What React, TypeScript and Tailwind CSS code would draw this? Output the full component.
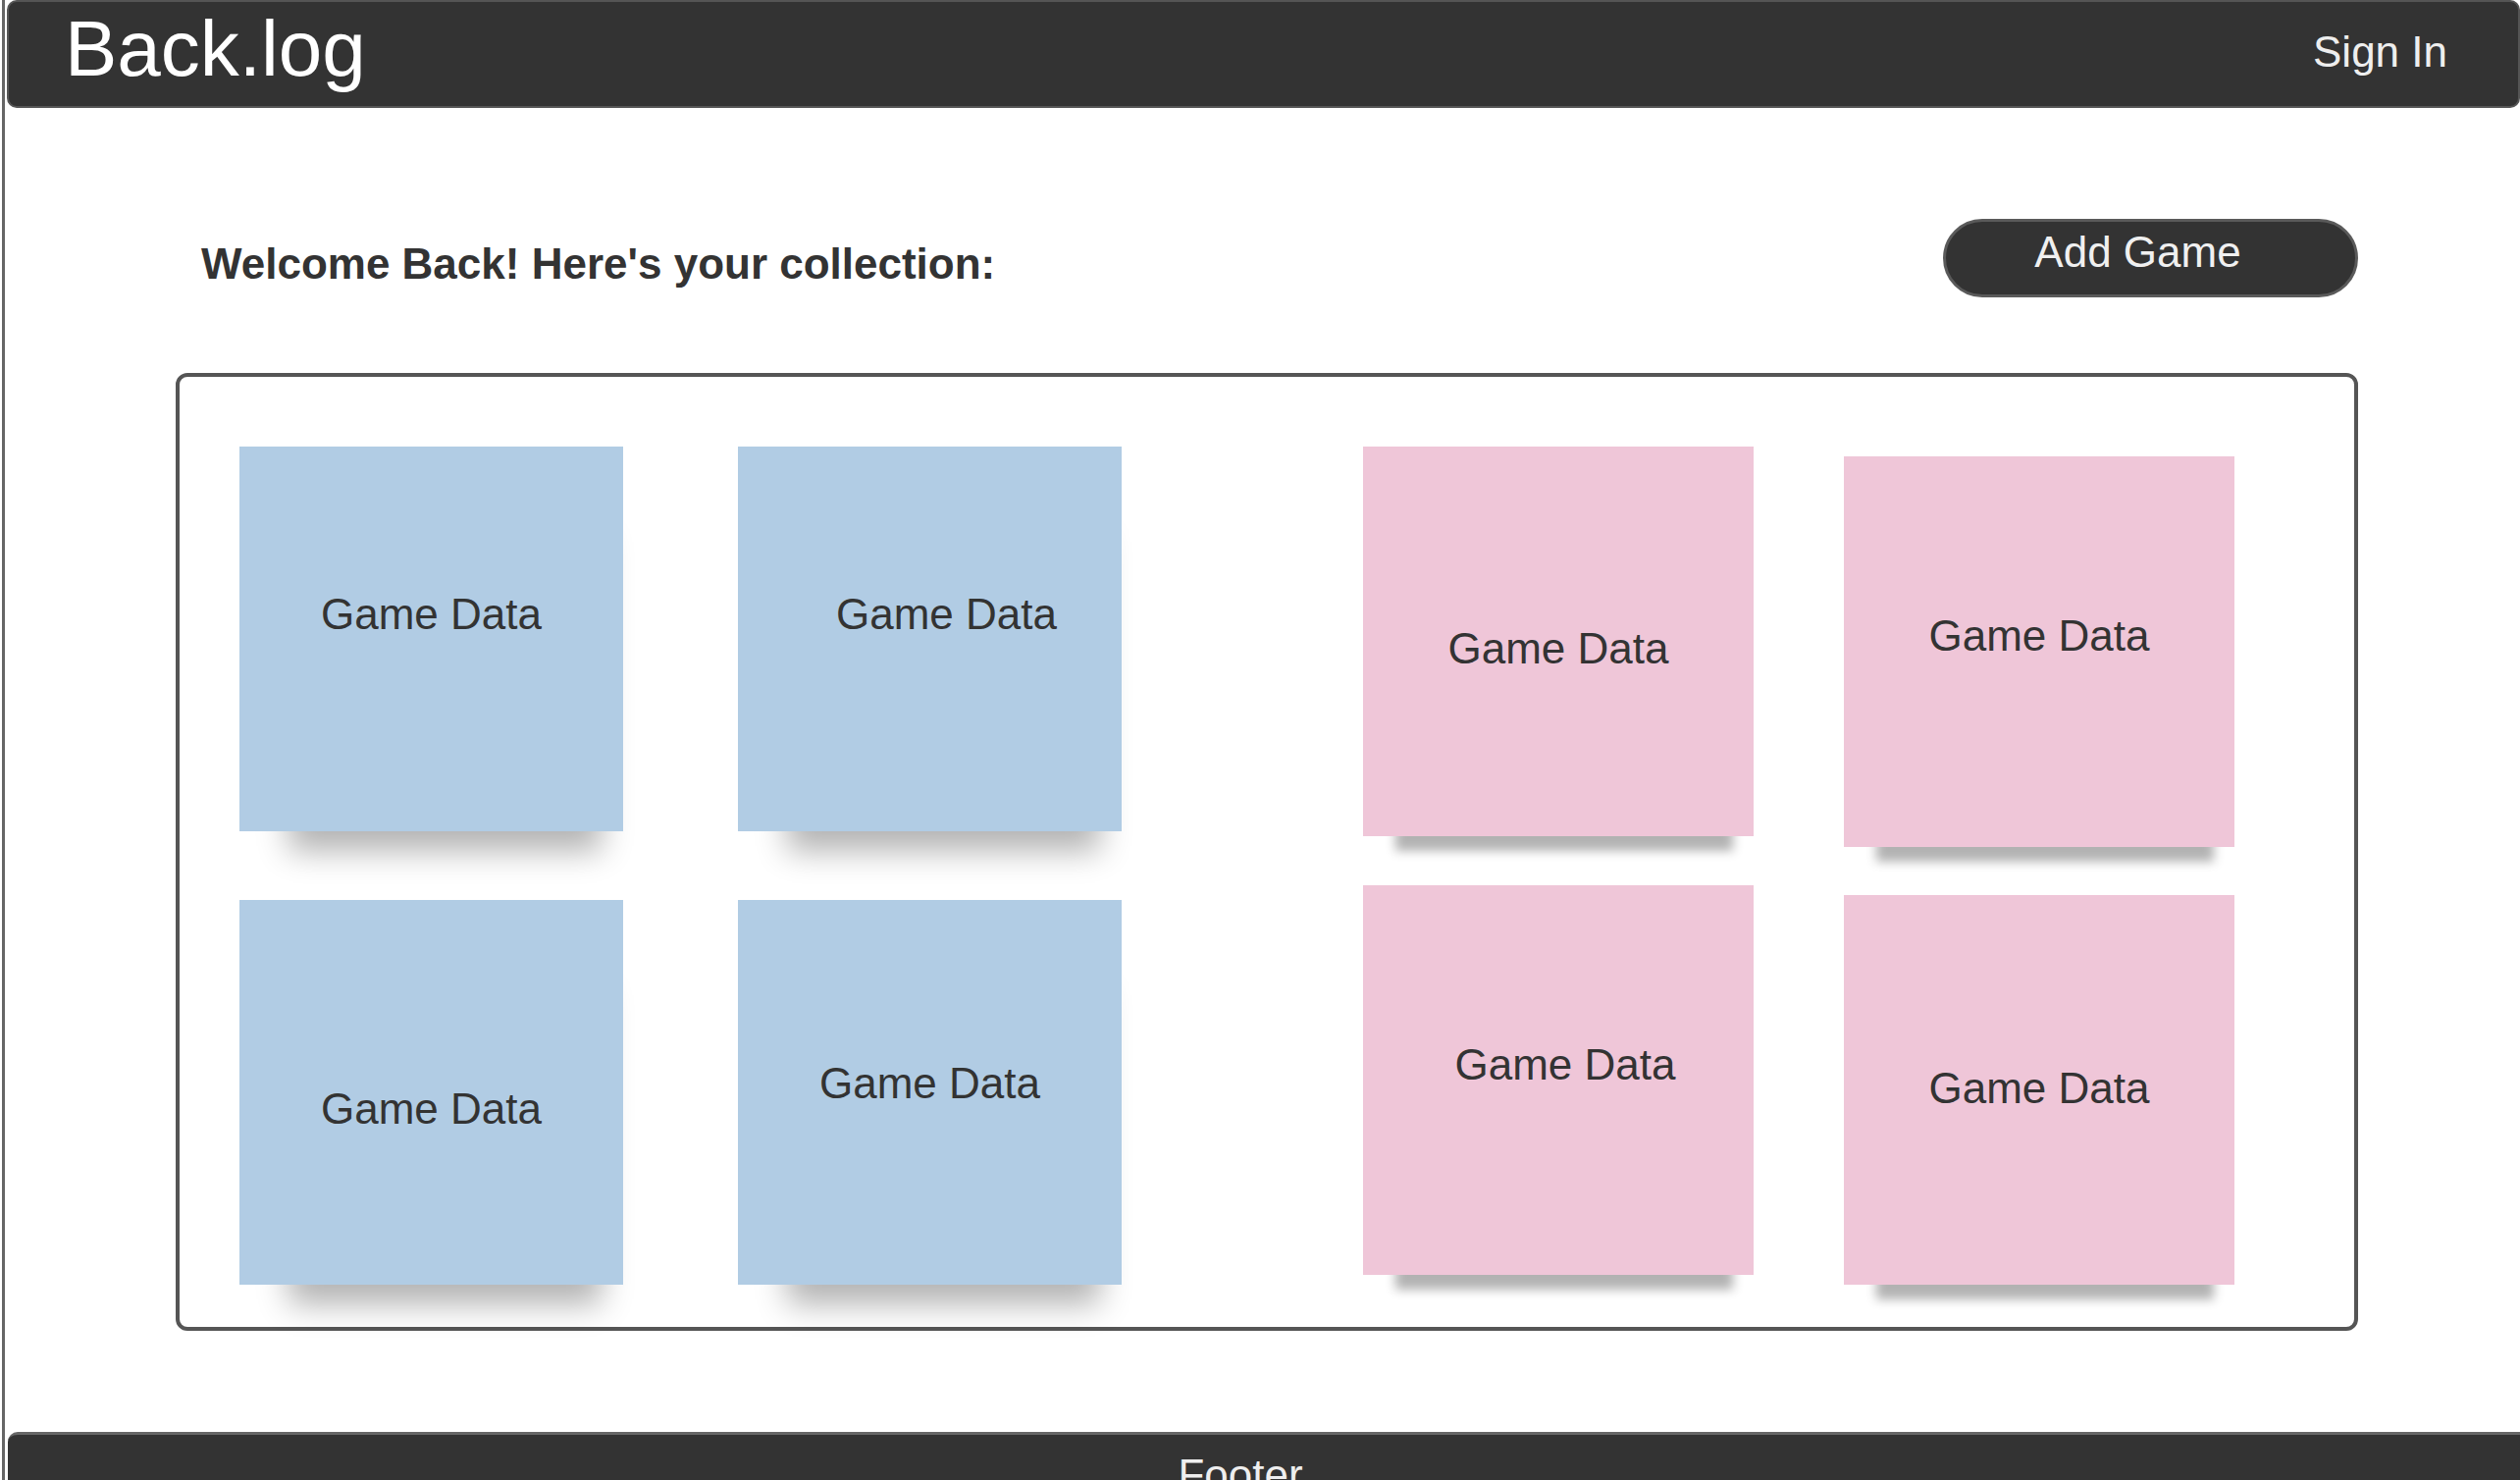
import React from "react";

type Card = {
  bg: string;
  w: string;
  h: string;
  text: string;
  shadow: string;
};

const blueShadow = "shadow-[14px_56px_30px_-36px_rgba(0,0,0,0.3)]";
const pinkShadow = "shadow-[6px_42px_10px_-27px_rgba(0,0,0,0.3)]";

const blueCards: Card[] = [
  { bg: "bg-[#b1cce4]", w: "w-[391px]", h: "h-[392px]", text: "-translate-y-[25px]", shadow: blueShadow },
  { bg: "bg-[#b1cce4]", w: "w-[391px]", h: "h-[392px]", text: "translate-x-[17px] -translate-y-[25px]", shadow: blueShadow },
  { bg: "bg-[#b1cce4]", w: "w-[391px]", h: "h-[392px]", text: "translate-y-[17px]", shadow: blueShadow },
  { bg: "bg-[#b1cce4]", w: "w-[391px]", h: "h-[392px]", text: "-translate-y-[9px]", shadow: blueShadow },
];

const pinkLeft: Card[] = [
  { bg: "bg-[#efc6d8]", w: "w-[398px]", h: "h-[397px]", text: "translate-y-[7px]", shadow: pinkShadow },
  { bg: "bg-[#efc6d8]", w: "w-[398px]", h: "h-[397px]", text: "translate-x-[7px] -translate-y-[16px]", shadow: pinkShadow },
];

const pinkRight: Card[] = [
  { bg: "bg-[#efc6d8]", w: "w-[398px]", h: "h-[398px]", text: "-translate-y-[16px]", shadow: pinkShadow },
  { bg: "bg-[#efc6d8]", w: "w-[398px]", h: "h-[397px]", text: "-translate-y-[2px]", shadow: pinkShadow },
];

function GameCard({ card }: { card: Card }) {
  return (
    <div className={`flex items-center justify-center ${card.bg} ${card.w} ${card.h} ${card.shadow}`}>
      <span className={`text-[44px] leading-none text-[#333] ${card.text}`}>Game Data</span>
    </div>
  );
}

export default function App() {
  return (
    <div className="h-[1508px] w-full overflow-hidden bg-white pl-[2px] font-['Liberation_Sans',Arial,sans-serif]">
      <div className="flex h-full flex-col border-l-[3px] border-[#666]">
        {/* header */}
        <header className="ml-[2px] flex h-[110px] shrink-0 items-center justify-between rounded-[10px] border-2 border-[#555] bg-[#333] pb-[10px] pl-[57px] pr-[72px]">
          <span className="text-[80px] leading-none text-white">Back.log</span>
          <span className="mt-[6px] text-[44px] leading-none text-[#eee]">Sign In</span>
        </header>

        {/* main */}
        <main className="h-[1349px] shrink-0 pl-[174px]">
          <div className="w-[2224px] pt-[113px]">
            <div className="flex h-[80px] items-center justify-between">
              <h1 className="mt-[12px] pl-[26px] text-[44px] font-bold leading-none text-[#333]">
                Welcome Back! Here's your collection:
              </h1>
              <button className="flex h-[80px] w-[423px] items-center justify-center rounded-full border-[3px] border-[#5a5a5a] bg-[#333] pb-[12px] pr-[26px] text-[44px] leading-none text-[#f0f0f0]">
                Add Game
              </button>
            </div>

            <div className="mt-[77px] flex h-[976px] items-start rounded-[12px] border-4 border-[#555] pl-[61px] pt-[71px]">
              <div className="grid grid-cols-[391px_391px] gap-x-[117px] gap-y-[70px]">
                {blueCards.map((c, i) => (
                  <GameCard key={i} card={c} />
                ))}
              </div>
              <div className="ml-[246px] flex flex-col gap-[50px]">
                {pinkLeft.map((c, i) => (
                  <GameCard key={i} card={c} />
                ))}
              </div>
              <div className="ml-[92px] mt-[10px] flex flex-col gap-[49px]">
                {pinkRight.map((c, i) => (
                  <GameCard key={i} card={c} />
                ))}
              </div>
            </div>
          </div>
        </main>

        {/* footer */}
        <footer className="ml-[3px] flex h-[110px] shrink-0 justify-center rounded-tl-[10px] border-t-[3px] border-[#666] bg-[#333] pr-[48px] pt-[19px]">
          <span className="text-[44px] leading-none text-[#eee]">Footer</span>
        </footer>
      </div>
    </div>
  );
}
